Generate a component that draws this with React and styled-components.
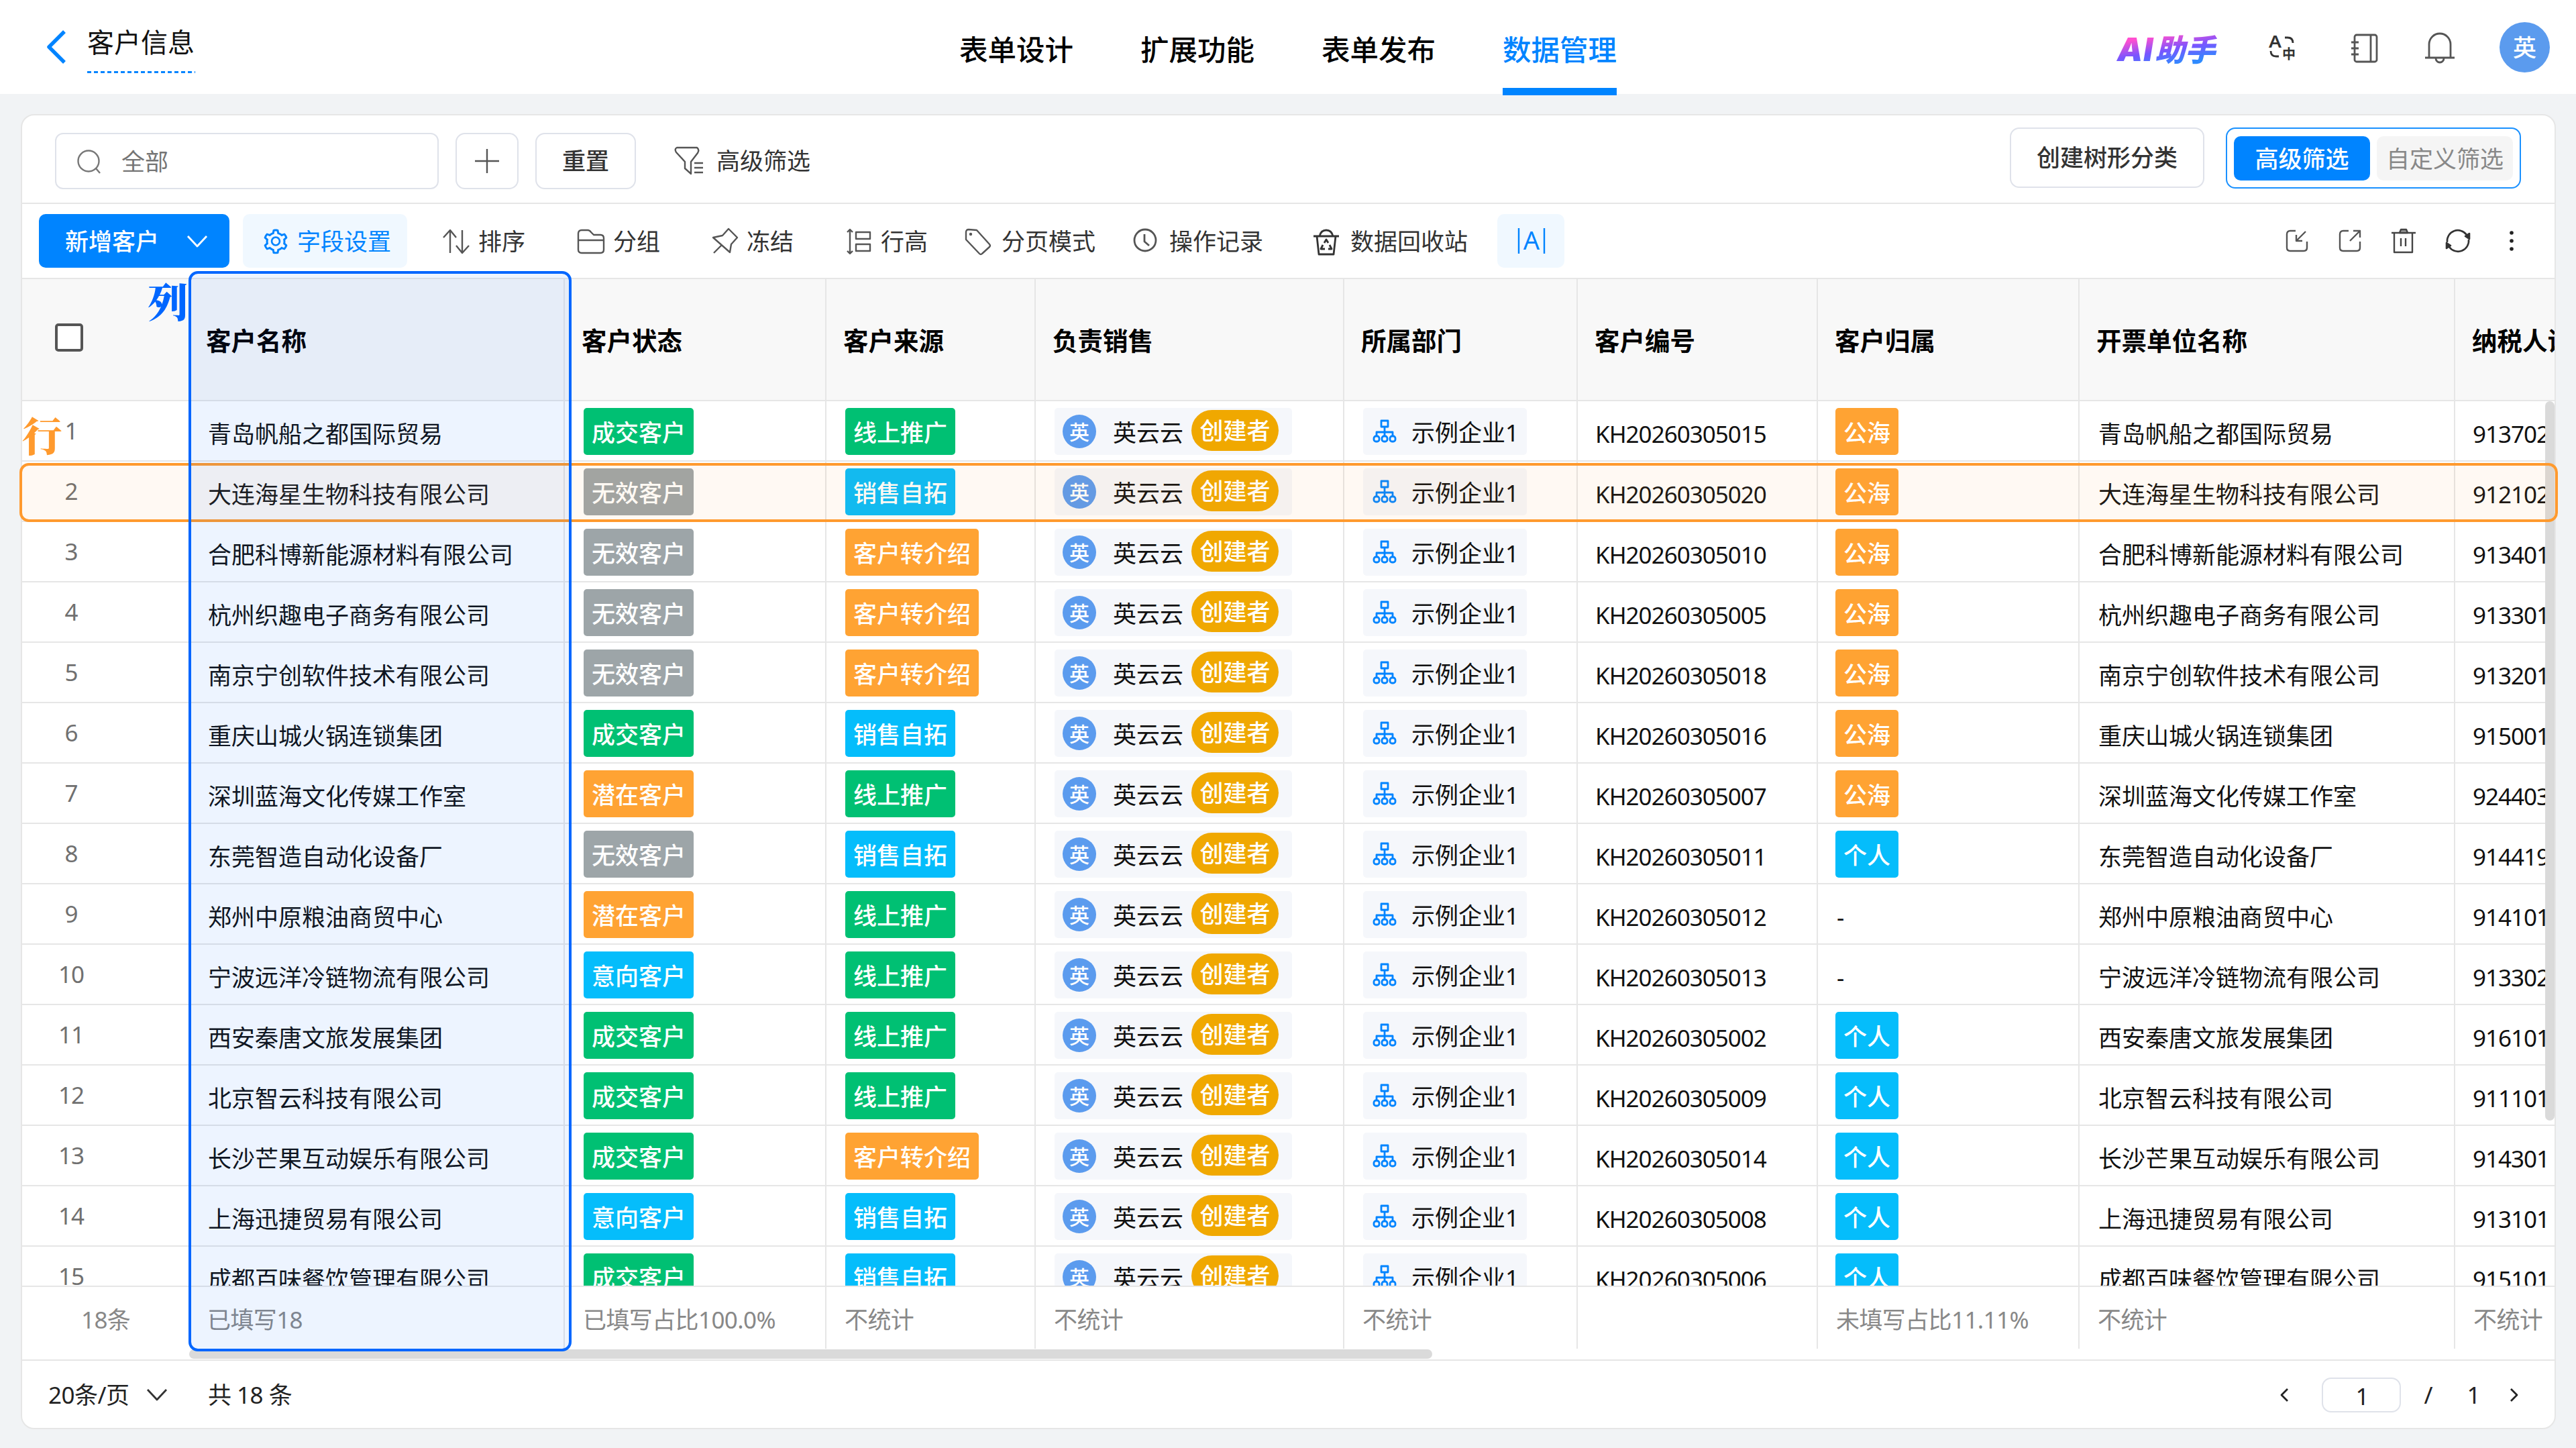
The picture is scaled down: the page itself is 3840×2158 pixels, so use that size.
import styled, { createGlobalStyle } from "styled-components";
import { AiOutlineSetting } from "react-icons/ai";

const BLUE = "#0084ff";
const LINE = "#e6e6e6";
const TAG_COLORS = {
  成交客户: "#00c073",
  无效客户: "#9da5a8",
  潜在客户: "#ffa333",
  意向客户: "#05bdfb",
  线上推广: "#00c073",
  销售自拓: "#05bdfb",
  客户转介绍: "#ffa333",
  公海: "#ffa333",
  个人: "#05bdfb",
};

const tabs = ["表单设计", "扩展功能", "表单发布", "数据管理"];

const headers = ["客户名称", "客户状态", "客户来源", "负责销售", "所属部门", "客户编号", "客户归属", "开票单位名称", "纳税人识别号"];

const summary = ["已填写18", "已填写占比100.0%", "不统计", "不统计", "不统计", "", "未填写占比11.11%", "不统计", "不统计"];

const rows = [
  ["青岛帆船之都国际贸易", "成交客户", "线上推广", "15", "公海", "913702"],
  ["大连海星生物科技有限公司", "无效客户", "销售自拓", "20", "公海", "912102"],
  ["合肥科博新能源材料有限公司", "无效客户", "客户转介绍", "10", "公海", "913401"],
  ["杭州织趣电子商务有限公司", "无效客户", "客户转介绍", "05", "公海", "913301"],
  ["南京宁创软件技术有限公司", "无效客户", "客户转介绍", "18", "公海", "913201"],
  ["重庆山城火锅连锁集团", "成交客户", "销售自拓", "16", "公海", "915001"],
  ["深圳蓝海文化传媒工作室", "潜在客户", "线上推广", "07", "公海", "924403"],
  ["东莞智造自动化设备厂", "无效客户", "销售自拓", "11", "个人", "914419"],
  ["郑州中原粮油商贸中心", "潜在客户", "线上推广", "12", "-", "914101"],
  ["宁波远洋冷链物流有限公司", "意向客户", "线上推广", "13", "-", "913302"],
  ["西安秦唐文旅发展集团", "成交客户", "线上推广", "02", "个人", "916101"],
  ["北京智云科技有限公司", "成交客户", "线上推广", "09", "个人", "911101"],
  ["长沙芒果互动娱乐有限公司", "成交客户", "客户转介绍", "14", "个人", "914301"],
  ["上海迅捷贸易有限公司", "意向客户", "销售自拓", "08", "个人", "913101"],
  ["成都百味餐饮管理有限公司", "成交客户", "销售自拓", "06", "个人", "915101"],
];

const Icon = ({ w = 40, h = 40, color = "#555", sw = 2.4, children }) => (
  <svg
    width={w}
    height={h}
    viewBox={`0 0 ${w} ${h}`}
    fill="none"
    stroke={color}
    strokeWidth={sw}
    strokeLinejoin="round"
    overflow="visible"
  >
    {children}
  </svg>
);

const BackIcon = () => (
  <Icon w={32} h={52} color={BLUE} sw={5.5}>
    <path d="M28 3 5 26l23 23" />
  </Icon>
);

const TranslateIcon = () => (
  <Icon w={42} h={42} color="#333" sw={2.8}>
    <text x="1" y="20" fontSize="25" fontFamily="Noto Sans" fontWeight="600" fill="#333" stroke="none" textLength="19" lengthAdjust="spacingAndGlyphs">A</text>
    <text x="21" y="37" fontSize="20" fontFamily="Noto Sans CJK SC" fontWeight="700" fill="#333" stroke="none">中</text>
    <path d="M25 5h4q8 0 8 8M4 25q0 8 8 8h4" />
  </Icon>
);

const NotebookIcon = () => (
  <Icon w={42} h={44} sw={2.8}>
    <rect x="6" y="2" width="33" height="40" rx="3" />
    <path d="M30 2v40M1 13h11M1 22h11M1 31h11" />
  </Icon>
);

const BellIcon = () => (
  <Icon w={46} h={48} sw={2.8}>
    <path d="M7 38V18a16 16 0 0 1 32 0v20M1 38h44M17 39a6 6 0 0 0 12 0" />
  </Icon>
);

const SearchIcon = () => (
  <Icon w={38} h={38} color="#777">
    <circle cx="17" cy="18" r="15.5" />
    <path d="m28 29 6 7" />
  </Icon>
);

const PlusIcon = () => (
  <Icon w={36} h={36}>
    <path d="M18 0v36M0 18h36" />
  </Icon>
);

const FunnelIcon = () => (
  <Icon w={44} h={44}>
    <path d="M4 2h30q4 3 1 8l-10 13v18l-9-8V23L3 9Q0 4 4 2zM30 25h13M30 32h13M30 39h13" />
  </Icon>
);

const ChevronDown = ({ color }) => (
  <Icon w={30} h={20} color={color} sw={2.8}>
    <path d="M1 2l14 15L29 2" />
  </Icon>
);

const SortIcon = () => (
  <Icon>
    <path d="M11 37V3M1 14 11 3l9 11M29 3v34M20 26l9 11 10-11" />
  </Icon>
);

const FolderIcon = () => (
  <Icon>
    <path d="M1 32V8q0-5 5-5h9q3 0 5 3l4 4h10q5 0 5 5v17q0 5-5 5H6q-5 0-5-5zM1 18h38" />
  </Icon>
);

const PinIcon = () => (
  <Icon>
    <path d="M26 1 39 14l-9 10-2 12L3 14l14-3zM16 25 4 37" />
  </Icon>
);

const RowHeightIcon = () => (
  <Icon>
    <path d="M7 2v36M3 6l4-4 4 4M3 34l4 4 4-4M16 6h21v10H16zM16 24h21v10H16z" />
  </Icon>
);

const TagIcon = () => (
  <Icon>
    <path d="M0 6q0-4 4-4l12 1 19 21q2 2 0 4L24 38q-2 2-4 0L0 17z" />
    <circle cx="7" cy="9" r="1" />
  </Icon>
);

const ClockIcon = () => (
  <Icon sw={2.8}>
    <circle cx="17" cy="18" r="16" />
    <path d="M16 9v11l7 6" />
  </Icon>
);

const RecycleIcon = () => (
  <Icon color="#333" sw={2.8}>
    <path d="M-2 12h38M7 12q2-9 10-9t10 9M3 12l3 27h22l3-27" />
    <path d="m14 22 3-5 3 5M22 25l3 6h-5M15 31H9l3-6" />
  </Icon>
);

const ImportIcon = () => (
  <Icon w={34} h={34}>
    <path d="M15 2H7Q2 2 2 7v20q0 5 5 5h20q5 0 5-5V18M30 3 16 17M16 8v9h9" />
  </Icon>
);

const ExportIcon = () => (
  <Icon w={34} h={34}>
    <path d="M15 2H7Q2 2 2 7v20q0 5 5 5h20q5 0 5-5V18M17 17 31 3M22 2h10v10" />
  </Icon>
);

const TrashIcon = () => (
  <Icon w={36} h={36} color="#444">
    <path d="M0 6h36" />
    <path d="m12 6 2-5h8l2 5z" fill="#999" />
    <path d="M4 6v29h27V6M14 14v12M21 14v12" />
  </Icon>
);

const RefreshIcon = () => (
  <Icon w={38} h={38} color="#333" sw={2.6}>
    <path d="M3 21A16 16 0 0 1 32 10M35 17A16 16 0 0 1 6 28" />
    <path d="m30 12 6-4v8zM8 26l-6 4v-8z" fill="#333" sw={1} />
  </Icon>
);

const MoreIcon = () => (
  <Icon w={8} h={32} sw={0}>
    <circle cx="4" cy="4" r="2.8" fill="#222" />
    <circle cx="4" cy="16" r="2.8" fill="#222" />
    <circle cx="4" cy="28" r="2.8" fill="#222" />
  </Icon>
);

const OrgIcon = () => (
  <Icon w={36} h={36} color={BLUE} sw={2.8}>
    <rect x="13" y="2" width="10" height="9" />
    <path d="M18 11v14M6 25v-6h24v6" />
    <rect x="2" y="25" width="8" height="8" rx="3" />
    <rect x="14" y="25" width="8" height="8" rx="3" />
    <rect x="26" y="25" width="8" height="8" rx="3" />
  </Icon>
);

const WidthIcon = () => (
  <Icon w={44} h={40} color={BLUE}>
    <path d="M3 1v38M41 1v38" />
    <text x="22" y="33" fontSize="38" fontFamily="Noto Sans" fontWeight="400" fill={BLUE} stroke="none" textAnchor="middle">A</text>
  </Icon>
);

const PageArrow = ({ next }) => (
  <Icon w={14} h={22} color="#222" sw={2.8}>
    <path d={next ? "M2 2l9 9-9 9" : "M12 2 3 11l9 9"} />
  </Icon>
);

const tools = [
  { label: "排序", icon: <SortIcon />, space: 53 },
  { label: "分组", icon: <FolderIcon />, space: 78 },
  { label: "冻结", icon: <PinIcon />, space: 76 },
  { label: "行高", icon: <RowHeightIcon />, space: 77 },
  { label: "分页模式", icon: <TagIcon />, space: 57 },
  { label: "操作记录", icon: <ClockIcon />, space: 57 },
  { label: "数据回收站", icon: <RecycleIcon />, space: 77 },
];

const App = () => {
  return (
    <Page>
      <GlobalStyle />
      <Header>
        <BackIcon />
        <Title>客户信息</Title>
        <Nav>
          {tabs.map((tab) => (
            <Tab key={tab} $active={tab === "数据管理"}>
              {tab}
            </Tab>
          ))}
        </Nav>
        <HeaderTools>
          <Assistant>
            <span>AI</span>助手
          </Assistant>
          <TranslateIcon />
          <NotebookIcon />
          <BellIcon />
          <UserAvatar>英</UserAvatar>
        </HeaderTools>
      </Header>

      <Panel>
        <FilterBar>
          <SearchBox>
            <SearchIcon />
            全部
          </SearchBox>
          <OutlineButton $width={94}>
            <PlusIcon />
          </OutlineButton>
          <OutlineButton $width={150}>重置</OutlineButton>
          <FilterLink>
            <FunnelIcon />
            高级筛选
          </FilterLink>
          <FilterRight>
            <OutlineButton $width={290} $height={90}>
              创建树形分类
            </OutlineButton>
            <Switcher>
              <SwitchItem $active>高级筛选</SwitchItem>
              <SwitchItem>自定义筛选</SwitchItem>
            </Switcher>
          </FilterRight>
        </FilterBar>

        <Toolbar>
          <PrimaryButton>
            新增客户
            <ChevronDown color="#fff" />
          </PrimaryButton>
          <FieldChip>
            <AiOutlineSetting size={42} />
            字段设置
          </FieldChip>
          {tools.map((tool) => (
            <Tool key={tool.label} $space={tool.space}>
              {tool.icon}
              {tool.label}
            </Tool>
          ))}
          <WidthChip>
            <WidthIcon />
          </WidthChip>
          <ToolbarRight>
            <ImportIcon />
            <ExportIcon />
            <TrashIcon />
            <RefreshIcon />
            <MoreIcon />
          </ToolbarRight>
        </Toolbar>

        <Table>
          <HeadRow>
            <CheckCell>
              <Checkbox />
            </CheckCell>
            {headers.map((text) => (
              <HeadCell key={text}>{text}</HeadCell>
            ))}
          </HeadRow>
          <Body>
            {rows.map(([name, state, source, no, owner, tax], i) => (
              <Row key={no}>
                <NumCell>{i + 1}</NumCell>
                <TextCell>{name}</TextCell>
                <Cell>
                  <Tag $color={TAG_COLORS[state]}>{state}</Tag>
                </Cell>
                <Cell>
                  <Tag $color={TAG_COLORS[source]}>{source}</Tag>
                </Cell>
                <Cell>
                  <Person>
                    <Avatar>英</Avatar>
                    <PersonName>英云云</PersonName>
                    <Badge>创建者</Badge>
                  </Person>
                </Cell>
                <Cell>
                  <Dept>
                    <OrgIcon />
                    <DeptName>示例企业1</DeptName>
                  </Dept>
                </Cell>
                <CodeCell>KH202603050{no}</CodeCell>
                {owner === "-" ? (
                  <TextCell>-</TextCell>
                ) : (
                  <OwnerCell>
                    <Tag $color={TAG_COLORS[owner]}>{owner}</Tag>
                  </OwnerCell>
                )}
                <TextCell>{name}</TextCell>
                <CodeCell>{tax}</CodeCell>
              </Row>
            ))}
            <VerticalBar />
          </Body>
          <SummaryRow>
            <SummaryCount>18条</SummaryCount>
            {summary.map((text, i) => (
              <SummaryCell key={i}>{text}</SummaryCell>
            ))}
          </SummaryRow>
          <ScrollTrack>
            <ScrollThumb />
          </ScrollTrack>
          <RowMark />
          <ColumnMark />
          <RowLabel>行</RowLabel>
          <ColumnLabel>列</ColumnLabel>
        </Table>

        <Footer>
          <PageSize>
            20条/页
            <ChevronDown color="#333" />
          </PageSize>
          <Total>共 18 条</Total>
          <Pager>
            <PageArrow />
            <PageInput>1</PageInput>
            <PageText $width={82}>/</PageText>
            <PageText $width={53}>1</PageText>
            <PageNext>
              <PageArrow next />
            </PageNext>
          </Pager>
        </Footer>
      </Panel>
    </Page>
  );
};

const GlobalStyle = createGlobalStyle`
  * {
    box-sizing: border-box;
  }
  body {
    margin: 0;
    background-color: #f1f3f5;
    font-family: "Noto Sans", "Noto Sans CJK SC", sans-serif;
    font-size: 35px;
    line-height: 48px;
    color: #111;
  }
  svg {
    flex-shrink: 0;
    display: block;
  }
`;

const Page = styled.div`
  width: 3840px;
  height: 2158px;
  overflow: hidden;
  display: flex;
  flex-direction: column;
`;

const Header = styled.header`
  display: flex;
  align-items: center;
  height: 140px;
  padding: 0 39px 0 68px;
  background-color: #fff;
`;

const Title = styled.div`
  width: 161px;
  height: 70px;
  margin: 8px 0 0 30px;
  font-size: 40px;
  line-height: 48px;
  white-space: nowrap;
  background: repeating-linear-gradient(90deg, ${BLUE} 0 6px, transparent 6px 10px) left bottom / 100% 3px no-repeat;
`;

const Nav = styled.nav`
  display: flex;
  gap: 100px;
  height: 142px;
  margin: 2px 0 0 1139px;
`;

const Tab = styled.div`
  width: 170px;
  padding-top: 43px;
  font-size: 42.5px;
  line-height: 62px;
  font-weight: 500;
  white-space: nowrap;
  color: ${({ $active }) => ($active ? BLUE : "#000")};
  border-bottom: 11px solid ${({ $active }) => ($active ? BLUE : "transparent")};
`;

const HeaderTools = styled.div`
  display: flex;
  align-items: center;
  margin-left: auto;

  svg {
    margin-top: 3px;
  }
  svg:nth-of-type(1) {
    margin-left: 68px;
  }
  svg:nth-of-type(2) {
    margin-left: 81px;
  }
  svg:nth-of-type(3) {
    margin-left: 68px;
  }
`;

const Assistant = styled.div`
  width: 160px;
  margin-top: 4px;
  padding-left: 3px;
  font-family: "Noto Sans CJK SC", sans-serif;
  font-size: 45px;
  font-weight: 900;
  font-style: italic;
  line-height: 50px;
  white-space: nowrap;
  color: transparent;
  background: linear-gradient(170deg, #ff4fd0 22%, #7a55ff 52%, #2f8bff 82%);
  background-clip: text;

  span {
    margin-right: 2px;
    font-family: Inter, sans-serif;
    font-size: 48px;
    line-height: 1;
    letter-spacing: 1px;
  }
`;

const UserAvatar = styled.div`
  width: 75px;
  height: 75px;
  margin-left: 66px;
  border-radius: 50%;
  background-color: #5b9bee;
  color: #fff;
  line-height: 75px;
  text-align: center;
  font-weight: 500;
`;

const Panel = styled.main`
  display: flex;
  flex-direction: column;
  height: 1960px;
  margin: 30px 30px 0 31px;
  border: 2px solid ${LINE};
  border-radius: 20px;
  background-color: #fff;
`;

const FilterBar = styled.div`
  display: flex;
  align-items: center;
  height: 132px;
  padding: 0 50px 0 49px;
  color: #333;
  border-bottom: 2px solid ${LINE};
`;

const SearchBox = styled.div`
  display: flex;
  align-items: center;
  gap: 28px;
  width: 572px;
  height: 84px;
  margin-top: 5px;
  padding: 2px 0 0 31px;
  border: 2px solid #dfe2ea;
  border-radius: 12px;
  color: #757575;
`;

const OutlineButton = styled.button`
  display: flex;
  justify-content: center;
  align-items: center;
  width: ${({ $width }) => $width}px;
  height: ${({ $height }) => $height || 84}px;
  margin: ${({ $height }) => ($height ? "0" : "5px 0 0 25px")};
  padding: 0;
  border: 2px solid #dfe2ea;
  border-radius: 14px;
  background-color: #fff;
  font: inherit;
  font-weight: 500;
  color: #333;
`;

const FilterLink = styled.div`
  display: flex;
  align-items: center;
  gap: 19px;
  margin: 5px 0 0 57px;
`;

const FilterRight = styled.div`
  display: flex;
  gap: 32px;
  margin: -4px 0 0 auto;
`;

const Switcher = styled.div`
  display: flex;
  gap: 10px;
  width: 440px;
  height: 91px;
  padding: 11px 10px;
  border: 2px solid #1a91ff;
  border-radius: 14px;
`;

const SwitchItem = styled.div`
  flex: 1;
  height: 66px;
  border-radius: 10px;
  line-height: 68px;
  text-align: center;
  white-space: nowrap;
  background-color: ${({ $active }) => ($active ? BLUE : "#f5f5f5")};
  color: ${({ $active }) => ($active ? "#fff" : "#888")};
  font-weight: ${({ $active }) => ($active ? 500 : 400)};
`;

const Toolbar = styled.div`
  display: flex;
  align-items: center;
  height: 112px;
  padding: 0 60px 0 25px;
  color: #333;
  border-bottom: 2px solid ${LINE};
`;

const PrimaryButton = styled.button`
  display: flex;
  justify-content: space-between;
  align-items: center;
  width: 284px;
  height: 80px;
  padding: 2px 33px 0 39px;
  border: 0;
  border-radius: 10px;
  background-color: ${BLUE};
  color: #fff;
  font: inherit;
  font-weight: 500;
`;

const FieldChip = styled.div`
  display: flex;
  align-items: center;
  gap: 11px;
  width: 245px;
  height: 80px;
  margin-left: 20px;
  padding: 2px 0 0 28px;
  border-radius: 10px;
  background-color: #f0f8ff;
  color: ${BLUE};
  white-space: nowrap;
`;

const Tool = styled.div`
  display: flex;
  align-items: center;
  gap: 13px;
  margin-left: ${({ $space }) => $space}px;
  padding-top: 2px;
  white-space: nowrap;
`;

const WidthChip = styled.div`
  display: flex;
  justify-content: center;
  align-items: center;
  width: 100px;
  height: 80px;
  margin-left: 44px;
  padding-left: 2px;
  border-radius: 10px;
  background-color: #f0f8ff;
`;

const ToolbarRight = styled.div`
  display: flex;
  align-items: center;
  gap: 45px;
  margin-left: auto;

  svg:nth-last-child(2) {
    margin-left: -1px;
  }
  svg:last-child {
    margin-left: 12px;
  }
`;

const Table = styled.section`
  position: relative;
  height: 1612px;
  border-bottom: 2px solid ${LINE};
`;

const Row = styled.div`
  display: grid;
  grid-template-columns: 249px 560px 390px 312px 460px 348px 358px 390px 560px 1fr;
  height: 90px;
  border-bottom: 2px solid ${LINE};
  white-space: nowrap;
`;

const HeadRow = styled(Row)`
  height: 182px;
  background-color: #f8f8f8;
  font-size: 37.5px;
  font-weight: 700;
  color: #000;
`;

const CheckCell = styled.div`
  padding: 66px 0 0 49px;
`;

const Checkbox = styled.div`
  width: 42px;
  height: 42px;
  border: 4px solid #555;
  border-radius: 5px;
  background-color: #fff;
`;

const HeadCell = styled.div`
  overflow: hidden;
  padding: 68px 0 0 25px;
  border-right: 2px solid ${LINE};

  &:last-child {
    border-right: 0;
  }
`;

const Body = styled.div`
  position: relative;
  height: 1318px;
  overflow: hidden;
`;

const Cell = styled.div`
  overflow: hidden;
  padding: 10px 0 0 28px;
  border-right: 2px solid ${LINE};

  &:last-child {
    border-right: 0;
  }
`;

const OwnerCell = styled(Cell)`
  padding-left: 26px;
`;

const TextCell = styled(Cell)`
  padding-top: 25px;
`;

const CodeCell = styled(TextCell)`
  padding-left: 26px;
  letter-spacing: -1px;
`;

const NumCell = styled.div`
  padding: 20px 103px 0 0;
  text-align: center;
  color: #707070;
  letter-spacing: -1px;
`;

const Tag = styled.span`
  display: inline-block;
  height: 70px;
  padding: 0 12px;
  border-radius: 5px;
  line-height: 74px;
  font-weight: 500;
  color: #fff;
  background-color: ${({ $color }) => $color};
`;

const Person = styled.div`
  display: flex;
  align-items: center;
  width: 354px;
  height: 70px;
  padding-left: 12px;
  border-radius: 5px;
  background-color: #f5f7fb;
`;

const Avatar = styled.div`
  width: 50px;
  height: 50px;
  border-radius: 50%;
  background-color: #5b9bee;
  color: #fff;
  font-size: 30px;
  font-weight: 500;
  line-height: 51px;
  text-align: center;
`;

const PersonName = styled.div`
  margin: 3px 12px 0 25px;
`;

const Badge = styled.div`
  width: 130px;
  height: 61px;
  margin-top: -3px;
  border-radius: 31px;
  background-color: #f0a800;
  color: #fff;
  font-weight: 500;
  line-height: 62px;
  text-align: center;
`;

const Dept = styled.div`
  display: flex;
  align-items: center;
  gap: 22px;
  width: 244px;
  height: 70px;
  padding-left: 14px;
  border-radius: 5px;
  background-color: #f5f7fb;
`;

const DeptName = styled.div`
  margin-top: 3px;
`;

const VerticalBar = styled.div`
  position: absolute;
  top: 0;
  right: 0;
  width: 14px;
  height: 1072px;
  border-radius: 7px;
  background-color: #dadada;
`;

const SummaryRow = styled(Row)`
  height: 94px;
  border-top: 2px solid ${LINE};
  border-bottom: 0;
  color: #888;
  letter-spacing: -0.6px;
`;

const SummaryCount = styled.div`
  padding: 25px 0 0 88px;
`;

const SummaryCell = styled(Cell)`
  padding: 25px 0 0 27px;
`;

const ScrollTrack = styled.div`
  height: 16px;
  padding: 1px 0 0 249px;
`;

const ScrollThumb = styled.div`
  width: 1853px;
  height: 14px;
  border-radius: 7px;
  background-color: #dadada;
`;

/* highlight frames drawn over the grid */
const RowMark = styled.div`
  position: absolute;
  top: 274px;
  left: -4px;
  width: 3784px;
  height: 88px;
  border: 4px solid #ff9a2e;
  border-radius: 14px;
  background-color: rgba(255, 154, 46, 0.06);
`;

const ColumnMark = styled.div`
  position: absolute;
  top: -12px;
  left: 248px;
  width: 571px;
  height: 1610px;
  border: 4px solid #0066ff;
  border-radius: 14px;
  background-color: rgba(0, 102, 255, 0.07);
`;

const MarkLabel = styled.div`
  position: absolute;
  font-family: "Noto Serif CJK SC", "Noto Serif SC", "Noto Sans CJK SC", serif;
  font-size: 60px;
  font-weight: 900;
  line-height: 60px;
`;

const RowLabel = styled(MarkLabel)`
  top: 201px;
  left: 0;
  color: #ff9a2e;
`;

const ColumnLabel = styled(MarkLabel)`
  top: 1px;
  left: 187px;
  color: #0066ff;
`;

const Footer = styled.footer`
  display: flex;
  align-items: center;
  flex: 1;
  padding: 2px 53px 0 39px;
  color: #222;
`;

const PageSize = styled.div`
  display: flex;
  align-items: center;
  justify-content: space-between;
  width: 177px;
  letter-spacing: -0.5px;
`;

const Total = styled.div`
  margin-left: 61px;
  letter-spacing: -0.5px;
`;

const Pager = styled.div`
  display: flex;
  align-items: center;
  margin-left: auto;
`;

const PageInput = styled.div`
  width: 118px;
  height: 52px;
  margin-left: 49px;
  padding-left: 3px;
  border: 2px solid #dfe2ea;
  border-radius: 14px;
  line-height: 52px;
  text-align: center;
`;

const PageText = styled.div`
  width: ${({ $width }) => $width}px;
  text-align: center;
`;

const PageNext = styled.div`
  margin-left: 27px;
`;

export default App;
